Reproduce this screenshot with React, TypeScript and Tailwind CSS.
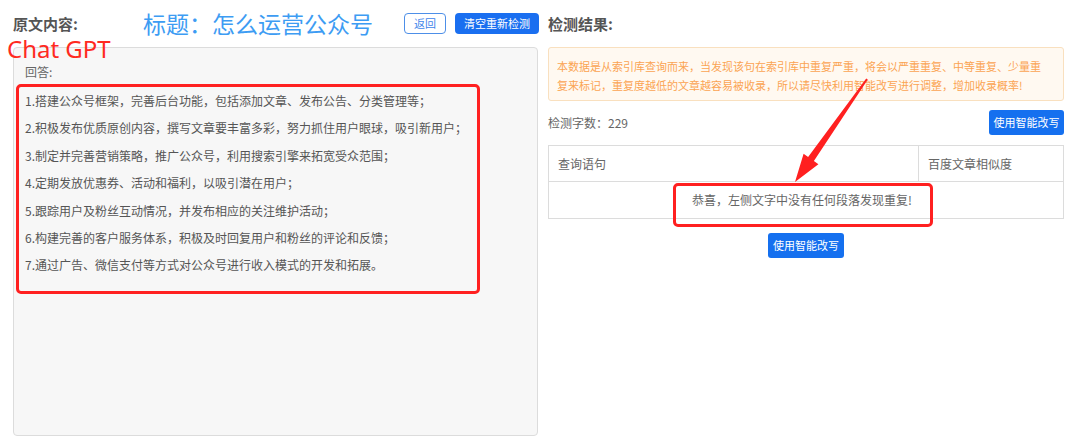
import React from "react";

const lines = [
  "1.搭建公众号框架，完善后台功能，包括添加文章、发布公告、分类管理等；",
  "2.积极发布优质原创内容，撰写文章要丰富多彩，努力抓住用户眼球，吸引新用户；",
  "3.制定并完善营销策略，推广公众号，利用搜索引擎来拓宽受众范围；",
  "4.定期发放优惠券、活动和福利，以吸引潜在用户；",
  "5.跟踪用户及粉丝互动情况，并发布相应的关注维护活动；",
  "6.构建完善的客户服务体系，积极及时回复用户和粉丝的评论和反馈；",
  "7.通过广告、微信支付等方式对公众号进行收入模式的开发和拓展。",
];

export default function App() {
  return (
    <div className="relative w-[1080px] h-[436px] overflow-hidden bg-white font-['Microsoft_YaHei','Noto_Sans_CJK_SC',sans-serif] text-[#666]">
      <div className="flex pl-[13px] gap-[10px]">
        {/* Left column */}
        <div className="w-[525px] flex flex-col">
          <div className="h-[47px] flex items-center">
            <span className="text-[15px] font-bold text-[#555] leading-none">原文内容:</span>
            <span className="ml-[65px] text-[23px] text-[#3d9cf3] leading-none">标题：怎么运营公众号</span>
            <div className="ml-auto flex gap-[9px] mr-[-1px]">
              <button className="w-[42px] h-[21px] rounded-[4px] border border-[#4d8fe8] text-[#3f86ea] text-[11px] leading-none flex items-center justify-center">
                返回
              </button>
              <button className="w-[84px] h-[21px] rounded-[4px] bg-[#1a6ff0] text-white text-[11px] leading-none flex items-center justify-center">
                清空重新检测
              </button>
            </div>
          </div>
          <div className="h-[389px] border border-[#dcdcdc] rounded-[4px] bg-[#f7f7f7]">
            <div className="pl-[11px] pt-[16px] text-[12px] leading-[16px] text-[#666]">回答:</div>
            <div className="mt-[4px] ml-[2px] w-[464px] h-[210px] border-[3px] border-[#ff2020] rounded-[5px] pl-[6px] text-[12px] leading-[27.4px] text-[#555]">
              {lines.map((l) => (
                <div key={l}>{l}</div>
              ))}
            </div>
          </div>
        </div>

        {/* Right column */}
        <div className="w-[516px] flex flex-col">
          <div className="h-[47px] flex items-center">
            <span className="text-[15px] font-bold text-[#555] leading-none">检测结果:</span>
          </div>
          <div className="h-[54px] border border-[#f9e0bf] bg-[#fff9f1] rounded-[3px] pl-[8px] pr-[14px] pt-[9px] text-[11px] leading-[19px] text-[#fba453]">
            本数据是从索引库查询而来，当发现该句在索引库中重复严重，将会以严重重复、中等重复、少量重复来标记，重复度越低的文章越容易被收录，所以请尽快利用智能改写进行调整，增加收录概率!
          </div>
          <div className="mt-[9px] h-[25px] flex items-center justify-between">
            <span className="text-[12px] text-[#666]">检测字数：229</span>
            <button className="w-[75px] h-[25px] rounded-[3px] bg-[#1570ef] text-white text-[11px] leading-none flex items-center justify-center">
              使用智能改写
            </button>
          </div>
          <div className="mt-[10px] border border-[#dcdcdc]">
            <div className="grid grid-cols-[370px_1fr] h-[36px] border-b border-[#dcdcdc] text-[12px] text-[#666]">
              <div className="pl-[9px] flex items-center border-r border-[#dcdcdc]">查询语句</div>
              <div className="pl-[9px] flex items-center">百度文章相似度</div>
            </div>
            <div className="h-[36px] flex items-center justify-center text-[12px] text-[#666] pr-[8px]">
              恭喜，左侧文字中没有任何段落发现重复!
            </div>
          </div>
          <div className="mt-[14px] flex justify-center">
            <button className="w-[76px] h-[25px] rounded-[3px] bg-[#1570ef] text-white text-[11px] leading-none flex items-center justify-center">
              使用智能改写
            </button>
          </div>
        </div>
      </div>

      {/* Annotations */}
      <div className="absolute left-[7px] top-[34px] text-[24px] leading-[29px] text-[#ff2a1f] font-['Noto_Sans',sans-serif]">
        Chat GPT
      </div>
      <div className="absolute left-[673px] top-[183px] w-[260px] h-[44px] border-[3px] border-[#ff2020] rounded-[5px]" />
      <svg className="absolute left-0 top-0" width="1080" height="436" viewBox="0 0 1080 436">
        <polygon
          points="866.2,78.4 867.8,79.6 813.9,161 818.4,164.2 795,182 803.6,153.8 808.1,157"
          fill="#ff2020"
        />
      </svg>
    </div>
  );
}
